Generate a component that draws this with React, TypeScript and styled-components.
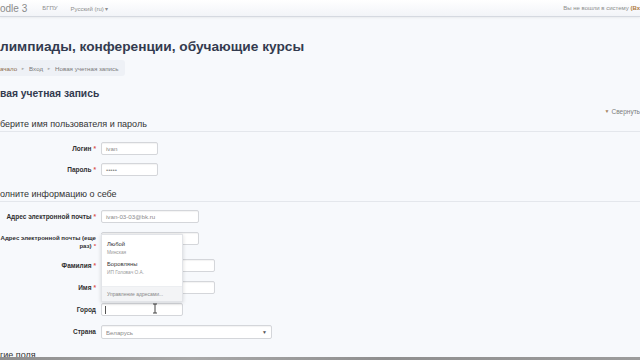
import React from "react";
import styled, { createGlobalStyle } from "styled-components";

const Global = createGlobalStyle`
  html, body { margin: 0; padding: 0; }
  body {
    width: 640px; height: 360px; overflow: hidden;
    background: #f7f9fc;
    font-family: "Liberation Sans", Arial, sans-serif;
    color: #333;
  }
`;

const Navbar = styled.header`
  height: 16px;
  border-bottom: 1px solid #d5d9e0;
  box-shadow: 0 1px 2px rgba(0, 0, 0, 0.06);
  background: linear-gradient(#ffffff, #f2f4f8);
  display: flex;
  align-items: center;
`;
const Brand = styled.span`
  font-size: 10px;
  color: #8a8a8a;
  margin-right: 15px;
`;
const NavItem = styled.span`
  font-size: 6px;
  color: #8d8d8d;
  margin-right: 13px;
`;
const NavRight = styled.span`
  margin-left: auto;
  font-size: 6px;
  color: #8d8d8d;
  white-space: nowrap;
  b { color: #b07a3c; font-weight: bold; }
`;

const Main = styled.main`
  display: flex;
  flex-direction: column;
`;
const Title = styled.h1`
  margin: 21px 0 0;
  font-size: 13.7px;
  line-height: 18px;
  font-weight: bold;
  color: #333b4f;
  white-space: nowrap;
`;
const Crumbs = styled.nav`
  margin-top: 4px;
  height: 16px;
  width: 125px;
  background: #eef1f6;
  border-radius: 0 3px 3px 0;
  display: flex;
  align-items: center;
  gap: 4px;
  font-size: 6.2px;
  color: #7a7a7a;
  white-space: nowrap;
`;
const Crumb = styled.span<{ $first?: boolean }>`
  color: ${(p) => (p.$first ? "#8a6a4a" : "#7a7a7a")};
`;
const Sep = styled.span`
  font-size: 4px;
  color: #aaa;
`;
const PageHeading = styled.h2`
  margin: 11px 0 0;
  font-size: 10.3px;
  line-height: 14px;
  font-weight: bold;
  color: #333b4f;
`;
const CollapseRow = styled.div`
  margin-top: 5px;
  height: 10px;
  display: flex;
  justify-content: flex-end;
  align-items: center;
  gap: 2px;
  font-size: 6.5px;
  color: #7d7d7d;
  white-space: nowrap;
`;
const Tri = styled.span`
  font-size: 5px;
  color: #a5825e;
`;
const Legend = styled.div<{ $mt: number }>`
  margin-top: ${(p) => p.$mt}px;
  font-size: 9px;
  line-height: 14px;
  color: #333;
  border-bottom: 1px solid #e4e7ec;
  white-space: nowrap;
`;
const Rows = styled.div<{ $pt: number; $gap: number }>`
  padding-top: ${(p) => p.$pt}px;
  display: flex;
  flex-direction: column;
  gap: ${(p) => p.$gap}px;
`;
const Row = styled.div`
  display: grid;
  grid-template-columns: 96px auto;
  column-gap: 5px;
  align-items: start;
`;
const Label = styled.label<{ $multi?: boolean }>`
  display: flex;
  flex-direction: column;
  align-items: flex-end;
  font-size: ${(p) => (p.$multi ? "6.1px" : "6.5px")};
  font-weight: bold;
  color: #2f2f2f;
  white-space: nowrap;
  line-height: ${(p) => (p.$multi ? "8px" : "13px")};
  padding-top: ${(p) => (p.$multi ? "2px" : "0")};
  span { display: block; }
`;
const Req = styled.i`
  font-style: normal;
  color: #d9534f;
  margin-left: 2px;
`;
const FieldWrap = styled.div`
  position: relative;
`;
const Field = styled.div<{ $w: number; $h?: number }>`
  width: ${(p) => p.$w}px;
  height: ${(p) => p.$h ?? 13}px;
  box-sizing: border-box;
  border: 1px solid #d4d6da;
  border-radius: 2px;
  background: #ffffff;
  box-shadow: inset 0 1px 1px rgba(0, 0, 0, 0.05);
  font-size: 6.2px;
  color: #8a8a8a;
  padding: 0 4px;
  display: flex;
  align-items: center;
  white-space: nowrap;
`;
const Caret = styled.span`
  width: 1px;
  height: 8px;
  background: #555;
  margin-left: -1px;
`;
const SelectArrow = styled.span`
  margin-left: auto;
  font-size: 5px;
  color: #555;
`;
const Popup = styled.div`
  position: absolute;
  left: 0;
  bottom: 14px;
  width: 82px;
  height: 68px;
  box-sizing: border-box;
  background: #fff;
  border: 1px solid #e2e4e8;
  box-shadow: 0 1px 4px rgba(0, 0, 0, 0.15);
  display: flex;
  flex-direction: column;
  z-index: 2;
`;
const PopItem = styled.div`
  padding: 6px 5px 0;
  display: flex;
  flex-direction: column;
  gap: 3px;
`;
const PopMain = styled.span`
  font-size: 5.8px;
  color: #333;
`;
const PopSub = styled.span`
  font-size: 4.8px;
  color: #999;
`;
const PopFooter = styled.div`
  margin-top: auto;
  height: 14px;
  background: #f3f4f6;
  border-top: 1px solid #eceef1;
  font-size: 5px;
  color: #888;
  display: flex;
  align-items: center;
  padding-left: 5px;
`;
const Cursor = styled.svg`
  position: absolute;
  left: 51px;
  top: 0px;
`;
const ScrubBar = styled.div`
  position: fixed;
  left: 0;
  right: 0;
  bottom: 0;
  height: 3px;
  background: linear-gradient(90deg, #8e8e8e, #a9a9a9 30%, #8f8f8f 60%, #9c9c9c);
`;

export default function App() {
  return (
    <>
      <Global />
      <Navbar>
        <Brand>odle 3</Brand>
        <NavItem>БГПУ</NavItem>
        <NavItem>Русский (ru) ▾</NavItem>
        <NavRight>
          Вы не вошли в систему <b>(Вх</b>
        </NavRight>
      </Navbar>
      <Main>
        <Title>лимпиады, конференции, обучающие курсы</Title>
        <Crumbs>
          <Crumb $first>ачало</Crumb>
          <Sep>►</Sep>
          <Crumb>Вход</Crumb>
          <Sep>►</Sep>
          <Crumb>Новая учетная запись</Crumb>
        </Crumbs>
        <PageHeading>вая учетная запись</PageHeading>
        <CollapseRow>
          <Tri>▼</Tri>
          <span>Свернуть</span>
        </CollapseRow>
        <Legend $mt={1}>берите имя пользователя и пароль</Legend>
        <Rows $pt={10} $gap={8}>
          <Row>
            <Label>
              <span>
                Логин<Req>*</Req>
              </span>
            </Label>
            <Field $w={57}>ivan</Field>
          </Row>
          <Row>
            <Label>
              <span>
                Пароль<Req>*</Req>
              </span>
            </Label>
            <Field $w={57}>•••••</Field>
          </Row>
        </Rows>
        <Legend $mt={11}>олните информацию о себе</Legend>
        <Rows $pt={8} $gap={9}>
          <Row>
            <Label>
              <span>
                Адрес электронной почты<Req>*</Req>
              </span>
            </Label>
            <Field $w={98}>ivan-03-03@bk.ru</Field>
          </Row>
          <Row>
            <Label $multi>
              <span>Адрес электронной почты (еще</span>
              <span>
                раз)<Req>*</Req>
              </span>
            </Label>
            <Field $w={98} />
          </Row>
          <Row>
            <Label>
              <span>
                Фамилия<Req>*</Req>
              </span>
            </Label>
            <Field $w={114} />
          </Row>
          <Row>
            <Label>
              <span>
                Имя<Req>*</Req>
              </span>
            </Label>
            <Field $w={114} />
          </Row>
          <Row>
            <Label>
              <span>Город</span>
            </Label>
            <FieldWrap>
              <Popup>
                <PopItem>
                  <PopMain>Любой</PopMain>
                  <PopSub>Минская</PopSub>
                </PopItem>
                <PopItem>
                  <PopMain>Боровляны</PopMain>
                  <PopSub>ИП Головач О.А.</PopSub>
                </PopItem>
                <PopFooter>Управление адресами...</PopFooter>
              </Popup>
              <Field $w={82}>
                <Caret />
              </Field>
              <Cursor width="6" height="11" viewBox="0 0 6 11">
                <path d="M1 1h4M3 1v9M1 10h4" stroke="#444" strokeWidth="1" fill="none" />
              </Cursor>
            </FieldWrap>
          </Row>
          <Row>
            <Label>
              <span>Страна</span>
            </Label>
            <Field $w={171} $h={14}>
              Беларусь
              <SelectArrow>▼</SelectArrow>
            </Field>
          </Row>
        </Rows>
        <Legend $mt={9}>гие поля</Legend>
      </Main>
      <ScrubBar />
    </>
  );
}
